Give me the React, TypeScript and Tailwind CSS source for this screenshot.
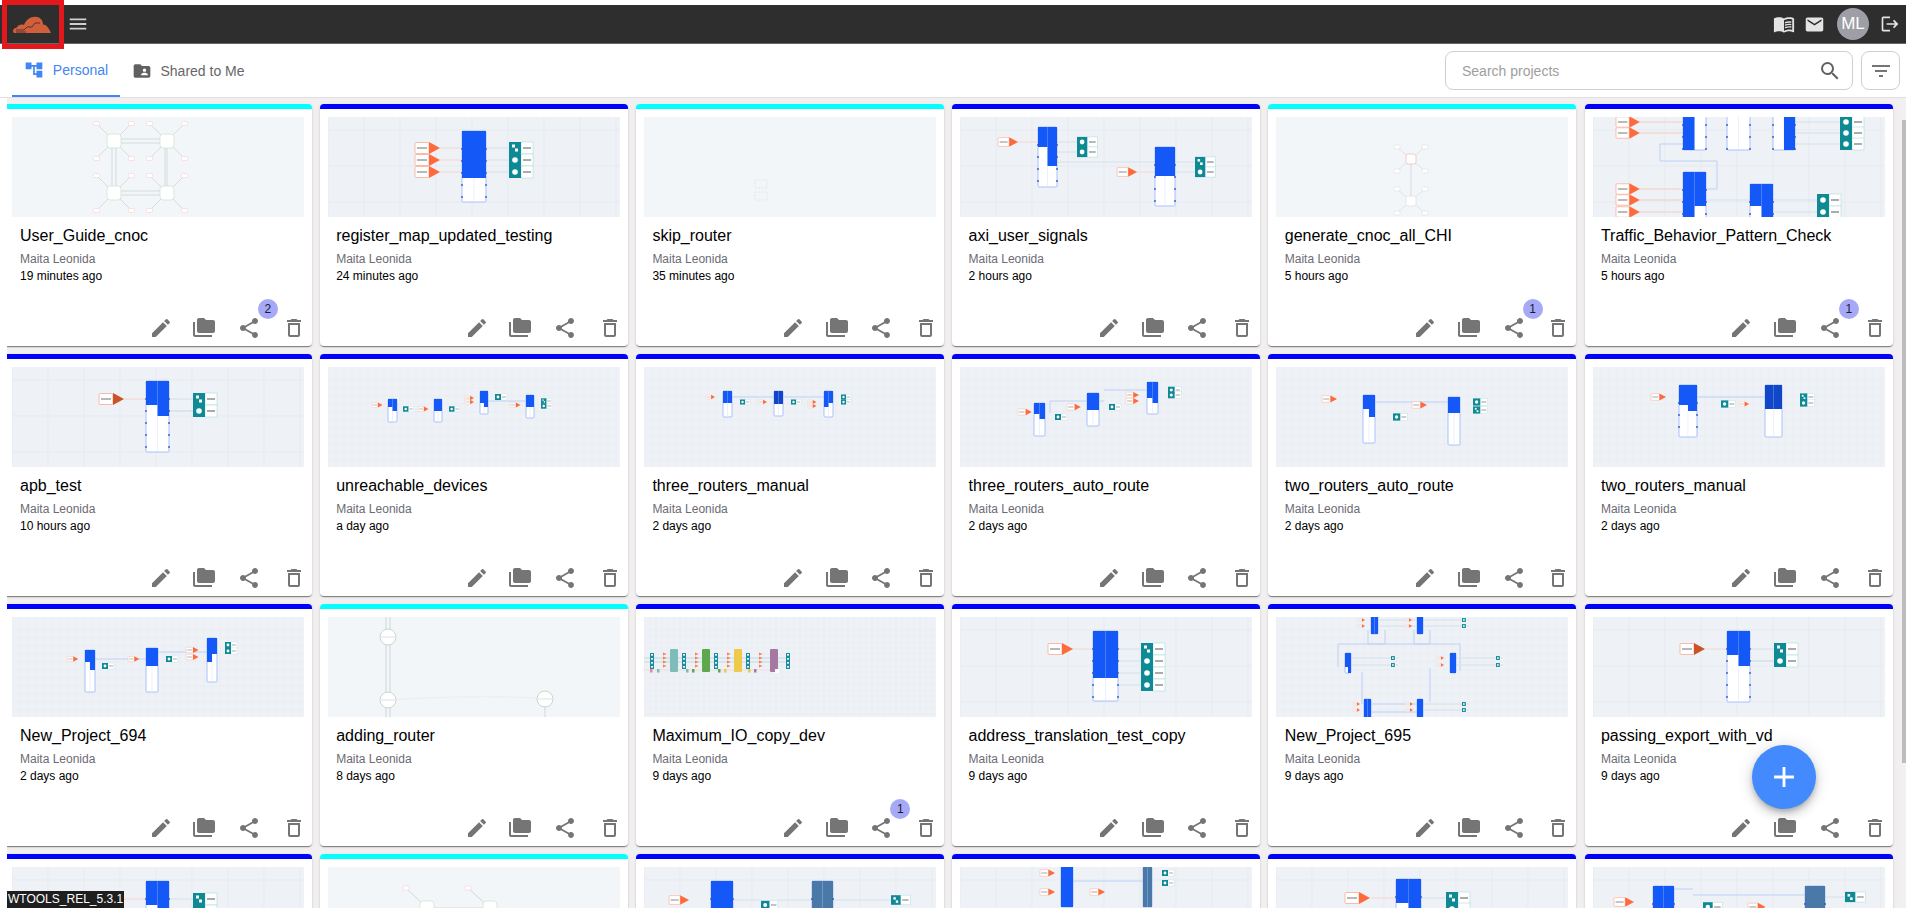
import type { ReactNode } from "react";
import {
  MdAccountTree,
  MdAdd,
  MdDeleteOutline,
  MdEdit,
  MdEmail,
  MdFilterList,
  MdFolderCopy,
  MdFolderShared,
  MdLogout,
  MdMenu,
  MdMenuBook,
  MdSearch,
  MdShare,
} from "react-icons/md";

const BLUE = "#1558f8";
const STEEL = "#4a78a8";

type InpProps = { x: number; y: number; s?: number; dark?: boolean };
type OutProps = { x: number; y: number; s?: number; alt?: boolean };

const Inp = ({ x, y, s = 1, dark }: InpProps) => (
  <g>
    <rect x={x} y={y - 5.5 * s} width={14 * s} height={11 * s} rx={s} fill="#fff" stroke="#f9bba8" strokeWidth={s} />
    <rect x={x + 2 * s} y={y - 0.7 * s} width={10 * s} height={1.4 * s} fill="#9a9a9a" />
    <polygon
      points={`${x + 14 * s},${y - 6 * s} ${x + 25 * s},${y} ${x + 14 * s},${y + 6 * s}`}
      fill={dark ? "#cc5228" : "#ff6a3d"}
    />
  </g>
);

const Out = ({ x, y, s = 1, alt }: OutProps) => (
  <g>
    <rect x={x + 12 * s} y={y - 6 * s} width={12 * s} height={12 * s} fill="#fff" stroke="#b4dfe0" strokeWidth={0.7 * s} />
    <rect x={x + 14 * s} y={y - 0.7 * s} width={8 * s} height={1.4 * s} fill="#888" />
    <rect x={x} y={y - 6 * s} width={12 * s} height={12 * s} fill="#0e8a94" />
    {alt ? (
      <g fill="#fff">
        <rect x={x + 3 * s} y={y - 3.5 * s} width={3 * s} height={3 * s} />
        <rect x={x + 6 * s} y={y + 0.5 * s} width={3 * s} height={3 * s} />
      </g>
    ) : (
      <circle cx={x + 6 * s} cy={y} r={2.8 * s} fill="#fff" />
    )}
  </g>
);

type RouterProps = { x: number; y: number; w: number; h: number; l: number; r: number; c?: string };

const Router = ({ x, y, w, h, l, r, c = BLUE }: RouterProps) => {
  // port dots only read at the larger zoom levels
  const ports = w >= 18 ? Array.from({ length: Math.floor((h - 18) / 12) + 1 }, (_, i) => y + 18 + i * 12) : [];
  return (
    <g>
      <rect x={x} y={y} width={w} height={h} rx={1} fill="#fff" stroke="#a9c1fb" strokeWidth={1} />
      <line x1={x + w / 2} y1={y} x2={x + w / 2} y2={y + h} stroke="#dbe5fd" strokeWidth={0.6} />
      <rect x={x} y={y} width={w / 2} height={l} fill={c} />
      <rect x={x + w / 2} y={y} width={w / 2} height={r} fill={c} />
      {ports.map((py) => (
        <g key={py} fill="#2f55b8">
          <circle cx={x} cy={py} r={0.9} />
          <circle cx={x + w} cy={py} r={0.9} />
        </g>
      ))}
    </g>
  );
};

const Wire = ({ d, c = "#d3e2ea", w = 1 }: { d: string; c?: string; w?: number }) => (
  <path d={d} fill="none" stroke={c} strokeWidth={w} />
);

const Pink = ({ d, w = 1 }: { d: string; w?: number }) => <Wire d={d} c="#f7d6cb" w={w} />;

const Frame = ({ d }: { d: string }) => <Wire d={d} c="#bfd1f8" w={1} />;

const Lines = ({ step }: { step: number }) => {
  const xs = Array.from({ length: Math.ceil(292 / step) }, (_, i) => i * step);
  const ys = Array.from({ length: Math.ceil(100 / step) + 1 }, (_, i) => 13 + i * step);
  const color = step > 20 ? "#e2e5ea" : "#e8ebf0";
  return (
    <g stroke={color} strokeWidth={0.6}>
      {xs.map((x) => (
        <line key={x} x1={x} y1={0} x2={x} y2={100} />
      ))}
      {ys.map((y) => (
        <line key={y} x1={0} y1={y} x2={292} y2={y} />
      ))}
    </g>
  );
};

const Node = ({ x, y, r = 7, c = "#cfe6cf" }: { x: number; y: number; r?: number; c?: string }) => (
  <rect x={x - r} y={y - r} width={r * 2} height={r * 2} rx={r * 0.45} fill="#fff" stroke={c} strokeWidth={0.8} />
);

const Leaf = ({ x, y, c = "#f6d5d5" }: { x: number; y: number; c?: string }) => (
  <rect x={x - 3} y={y - 2} width={6} height={4} rx={1} fill="#fff" stroke={c} strokeWidth={0.7} />
);

const Mesh = ({ x, y }: { x: number; y: number }) => (
  <g>
    {[
      [-17.5, -17.5],
      [17.5, -17.5],
      [-17.5, 17.5],
      [17.5, 17.5],
    ].map(([dx, dy]) => (
      <g key={`${dx}${dy}`}>
        <line x1={x} y1={y} x2={x + dx} y2={y + dy} stroke="#bcc2c2" strokeWidth={0.5} />
        <Leaf x={x + dx} y={y + dy} />
      </g>
    ))}
    <Node x={x} y={y} />
  </g>
);

const singleRouter = (dark: boolean, cut: boolean) => (
  <>
    <Lines step={36} />
    <Pink d="M112 32H134" />
    <Wire d="M157 32H181" />
    <Wire d="M157 44H181" w={1.6} />
    <Router x={134} y={14} w={23} h={71} l={cut ? 24 : 47} r={35} />
    <Inp x={87} y={32} dark={dark} />
    <Out x={181} y={32} alt />
    <Out x={181} y={44} />
  </>
);

const previews: Record<string, ReactNode> = {
  User_Guide_cnoc: (
    <>
      <Wire d="M102 22H155M102 26H155M100 24V76M104 24V76M155 24V76M153 24V76M102 74H155M102 78H155" c="#cdd4d5" w={0.8} />
      <Mesh x={102} y={24} />
      <Mesh x={155} y={24} />
      <Mesh x={102} y={76} />
      <Mesh x={155} y={76} />
    </>
  ),
  register_map_updated_testing: (
    <>
      <Lines step={36} />
      <Pink d="M112 31H134M112 43H134M112 55H134" />
      <Wire d="M158 31H181M158 43H181M158 55H181" />
      <Router x={134} y={14} w={24} h={71} l={47} r={47} />
      {[31, 43, 55].map((y) => (
        <Inp key={y} x={87} y={y} />
      ))}
      <Out x={181} y={31} alt />
      <Out x={181} y={43} />
      <Out x={181} y={55} />
    </>
  ),
  skip_router: (
    <g fill="none" stroke="#d6dcdc" strokeWidth={0.7} strokeDasharray="1.5 1.5">
      <rect x={111} y={63} width={12} height={8} />
      <rect x={111} y={75} width={12} height={8} />
    </g>
  ),
  axi_user_signals: (
    <>
      <Lines step={36} />
      <Pink d="M58 25H78M168 55H195" />
      <Wire d="M97 25H117M97 35H117M97 45H195M215 45H235M215 55H235" />
      <Router x={78} y={10} w={19} h={60} l={20} r={39} />
      <Router x={195} y={30} w={20} h={59} l={29} r={29} />
      <Inp x={38} y={25} s={0.8} />
      <Inp x={157} y={55} s={0.8} />
      <Out x={117} y={25} s={0.85} />
      <Out x={117} y={35} s={0.85} />
      <Out x={235} y={45} s={0.85} alt />
      <Out x={235} y={55} s={0.85} />
    </>
  ),
  generate_cnoc_all_CHI: (
    <>
      <Wire d="M135 42V84" c="#d4dada" />
      <Wire d="M135 42L121 30M135 42L149 30M135 42L121 54M135 42L149 54M135 84L121 72M135 84L149 72M135 84L121 96M135 84L149 96" c="#d0d6d6" w={0.6} />
      {[
        [121, 30],
        [149, 30],
        [121, 54],
        [149, 54],
        [121, 72],
        [149, 72],
        [121, 96],
        [149, 96],
      ].map(([x, y]) => (
        <Leaf key={`${x}${y}`} x={x} y={y} c="#dfe3e3" />
      ))}
      <Node x={135} y={42} r={5} c="#f1bcbc" />
      <Node x={135} y={84} r={5} c="#dfe3e3" />
    </>
  ),
  Traffic_Behavior_Pattern_Check: (
    <>
      <Lines step={36} />
      <Wire d="M46 5H90M46 16H90M46 72H90M46 83H90M46 95H90" c="#f7cdbf" />
      <Wire d="M202 5H247M202 16H247M202 27H247M113 83H157M180 83H224M180 95H224" />
      <Frame d="M90 27H67V44H124V72H113" />
      <Router x={90} y={-10} w={23} h={43} l={43} r={0} />
      <Router x={134} y={-10} w={23} h={43} l={0} r={0} />
      <Router x={180} y={-10} w={22} h={43} l={0} r={43} />
      <Router x={90} y={55} w={23} h={60} l={60} r={34} />
      <Router x={157} y={67} w={23} h={50} l={22} r={50} />
      {[5, 16, 72, 83, 95].map((y) => (
        <Inp key={y} x={23} y={y} s={0.95} />
      ))}
      {[5, 16, 27].map((y) => (
        <Out key={y} x={247} y={y} />
      ))}
      <Out x={224} y={83} />
      <Out x={224} y={95} />
    </>
  ),
  apb_test: singleRouter(true, true),
  unreachable_devices: (
    <>
      <Lines step={8} />
      <Frame d="M160 34H198" />
      <Inp x={44} y={38} s={0.42} />
      <Router x={60} y={32} w={9} h={23} l={8} r={12} />
      <Out x={75} y={42} s={0.45} />
      <Inp x={90} y={42} s={0.42} />
      <Router x={106} y={32} w={8} h={23} l={12} r={12} />
      <Out x={121} y={42} s={0.45} />
      <Inp x={137} y={31} s={0.36} />
      <Inp x={137} y={35} s={0.36} />
      <Router x={152} y={24} w={8} h={23} l={12} r={16} />
      <Out x={167} y={30} s={0.5} />
      <Inp x={182} y={38} s={0.42} />
      <Router x={198} y={28} w={8} h={23} l={12} r={12} />
      <Out x={213} y={34} s={0.45} alt />
      <Out x={213} y={39} s={0.45} />
    </>
  ),
  three_routers_manual: (
    <>
      <Lines step={8} />
      <Frame d="M88 30H180" />
      <Inp x={62} y={30} s={0.36} />
      <Router x={79} y={24} w={9} h={26} l={12} r={12} />
      <Out x={96} y={35} s={0.42} />
      <Inp x={114} y={35} s={0.36} />
      <Router x={130} y={24} w={9} h={25} l={13} r={13} c="#1046c8" />
      <Out x={147} y={35} s={0.42} />
      <Inp x={164} y={35} s={0.34} />
      <Inp x={164} y={39} s={0.34} />
      <Router x={180} y={24} w={9} h={26} l={16} r={12} />
      <Out x={197} y={30} s={0.42} />
      <Out x={197} y={35} s={0.42} />
    </>
  ),
  three_routers_auto_route: (
    <>
      <Lines step={8} />
      <Frame d="M90 46V34H144M144 23H187" />
      <Inp x={58} y={45} s={0.55} />
      <Router x={74} y={36} w={11} h={33} l={11} r={16} />
      <Out x={95} y={50} s={0.5} />
      <Inp x={107} y={40} s={0.55} />
      <Router x={127} y={26} w={12} h={33} l={17} r={17} />
      <Out x={149} y={40} s={0.5} />
      <Inp x={166} y={28} s={0.52} />
      <Inp x={166} y={34} s={0.52} />
      <Router x={187} y={15} w={11} h={32} l={16} r={21} />
      <Out x={208} y={23} s={0.55} />
      <Out x={208} y={28} s={0.55} />
    </>
  ),
  two_routers_auto_route: (
    <>
      <Lines step={8} />
      <Frame d="M99 35H172" />
      <Inp x={46} y={32} s={0.6} />
      <Router x={87} y={28} w={12} h={48} l={14} r={22} />
      <Out x={117} y={50} s={0.6} />
      <Inp x={136} y={38} s={0.6} />
      <Router x={172} y={30} w={12} h={48} l={16} r={16} />
      <Out x={197} y={35} s={0.6} />
      <Out x={197} y={43} s={0.6} alt />
    </>
  ),
  two_routers_manual: (
    <>
      <Lines step={8} />
      <Frame d="M104 30H172" />
      <Inp x={58} y={30} s={0.6} />
      <Router x={86} y={18} w={18} h={52} l={20} r={26} />
      <Out x={128} y={37} s={0.6} />
      <Inp x={146} y={37} s={0.4} />
      <Router x={172} y={18} w={17} h={52} l={24} r={24} c="#1046c8" />
      <Out x={207} y={30} s={0.6} alt />
      <Out x={207} y={36} s={0.6} />
    </>
  ),
  New_Project_694: (
    <>
      <Lines step={8} />
      <Frame d="M83 42H134M146 35H195" />
      <Inp x={55} y={42} s={0.45} />
      <Router x={73} y={33} w={10} h={42} l={12} r={20} />
      <Out x={90} y={49} s={0.5} />
      <Inp x={116} y={42} s={0.45} />
      <Router x={134} y={31} w={12} h={44} l={18} r={18} />
      <Out x={154} y={42} s={0.5} />
      <Inp x={174} y={33} s={0.5} />
      <Inp x={174} y={40} s={0.5} />
      <Router x={195} y={21} w={10} h={44} l={24} r={16} />
      <Out x={213} y={28} s={0.5} />
      <Out x={213} y={34} s={0.5} />
    </>
  ),
  adding_router: (
    <>
      <Wire d="M58 0V100M62 0V100M217 82V100" c="#cfd6d8" />
      <Wire d="M60 83C100 80 180 78 217 82" c="#e3e8ea" w={0.6} />
      <circle cx={60} cy={20} r={8} fill="#fff" stroke="#c5d6ca" />
      <circle cx={60} cy={83} r={8} fill="#fff" stroke="#c5d6ca" />
      <circle cx={217} cy={82} r={8} fill="#fff" stroke="#c5d6ca" />
      <line x1={53} y1={20} x2={67} y2={20} stroke="#c6ced0" strokeWidth={0.6} />
      <line x1={53} y1={83} x2={67} y2={83} stroke="#c6ced0" strokeWidth={0.6} />
      <line x1={210} y1={82} x2={224} y2={82} stroke="#c6ced0" strokeWidth={0.6} />
    </>
  ),
  Maximum_IO_copy_dev: (
    <>
      <Lines step={6} />
      <Wire d="M0 41H142M0 45H142" c="#b9dde2" />
      <Wire d="M0 53H130" c="#f3d9dc" />
      {[
        [26, "#7dbcb8"],
        [58, "#5da84e"],
        [90, "#eec94a"],
        [126, "#a878a4"],
      ].map(([x, c]) => (
        <rect key={x} x={x as number} y={32} width={8} height={23} rx={1} fill={c as string} />
      ))}
      <rect x={131} y={52} width={4} height={4} fill="#fff" />
      {[6, 38, 70, 102, 142].map((x) => (
        <g key={x}>
          <rect x={x} y={36} width={4} height={16} fill="#1a8ea0" />
          {[38, 42, 46, 50].map((y) => (
            <rect key={y} x={x + 1} y={y - 1} width={2} height={1.6} fill="#fff" />
          ))}
        </g>
      ))}
      {[19, 51, 83, 115].flatMap((x) =>
        [37, 41, 45, 49].map((y) => (
          <polygon key={`${x}${y}`} points={`${x},${y - 1.5} ${x + 3.5},${y} ${x},${y + 1.5}`} fill="#ff7a50" />
        ))
      )}
      {[
        [6, "#e08a9a"],
        [13, "#7dbcb8"],
        [42, "#7dbcb8"],
        [48, "#5da84e"],
        [74, "#5da84e"],
        [80, "#eec94a"],
        [104, "#eec94a"],
        [110, "#a878a4"],
      ].map(([x, c]) => (
        <rect key={`${x}`} x={x as number} y={52} width={2.5} height={3.5} fill={c as string} />
      ))}
    </>
  ),
  address_translation_test_copy: (
    <>
      <Lines step={36} />
      <Pink d="M111 32H133" />
      <Wire d="M158 32H181M158 44H181M158 56H181M158 68H181" />
      <Router x={133} y={14} w={25} h={70} l={47} r={47} />
      <Inp x={88} y={32} />
      <Out x={181} y={32} alt />
      <Out x={181} y={44} />
      <Out x={181} y={56} />
      <Out x={181} y={68} />
    </>
  ),
  New_Project_695: (
    <>
      <Lines step={8} />
      <Frame d="M92 13V27H109V13M138 13V27H154V13M62 50V27H184V54M86 55V87M154 51V85" />
      <Frame d="M95 87H141M95 95H141" />
      <Wire d="M102 3H186M102 9H186M75 41H115M75 48H115M180 41H220M180 48H220M147 87H186M147 93H186" />
      <Router x={95} y={-4} w={7} h={21} l={21} r={21} />
      <Router x={141} y={-4} w={6} h={21} l={21} r={21} />
      <Router x={69} y={36} w={6} h={20} l={14} r={20} />
      <Router x={174} y={36} w={6} h={20} l={20} r={20} />
      <Router x={88} y={82} w={7} h={24} l={24} r={24} />
      <Router x={141} y={82} w={6} h={24} l={24} r={24} />
      {[
        [82, 3],
        [82, 9],
        [129, 3],
        [129, 9],
        [161, 41],
        [161, 48],
        [77, 87],
        [77, 93],
        [130, 87],
        [130, 93],
      ].map(([x, y]) => (
        <Inp key={`${x}${y}`} x={x} y={y} s={0.28} />
      ))}
      {[
        [186, 3],
        [186, 9],
        [115, 41],
        [115, 48],
        [220, 41],
        [220, 48],
        [186, 87],
        [186, 93],
      ].map(([x, y]) => (
        <Out key={`${x}${y}`} x={x} y={y} s={0.32} />
      ))}
    </>
  ),
  passing_export_with_vd: singleRouter(true, true),
  row4_a: singleRouter(false, true),
  row4_b: (
    <>
      <Wire d="M78 21L99 41M140 21L162 41M99 41H162" c="#c3cbcd" w={0.7} />
      <Leaf x={78} y={21} />
      <Leaf x={140} y={21} />
      <Node x={99} y={41} />
      <Node x={162} y={41} />
    </>
  ),
  row4_c: (
    <>
      <Lines step={36} />
      <Wire d="M89 33H117M134 33H168M189 33H247" />
      <Router x={67} y={14} w={22} h={60} l={50} r={50} />
      <Router x={168} y={14} w={21} h={60} l={50} r={50} c={STEEL} />
      <Inp x={25} y={33} s={0.8} />
      <Out x={117} y={38} s={0.7} />
      <Out x={247} y={33} s={0.8} alt />
    </>
  ),
  row4_d: (
    <>
      <Lines step={36} />
      <Frame d="M113 14H183" />
      <Router x={101} y={0} w={12} h={40} l={40} r={40} />
      <Router x={183} y={0} w={9} h={40} l={40} r={40} c={STEEL} />
      <Inp x={80} y={6} s={0.6} />
      <Inp x={80} y={25} s={0.6} />
      <Inp x={130} y={25} s={0.6} />
      <Out x={202} y={6} s={0.5} />
      <Out x={202} y={16} s={0.5} />
    </>
  ),
  row4_e: (
    <>
      <Lines step={36} />
      <Pink d="M95 31H120" />
      <Wire d="M145 31H170" />
      <Router x={120} y={12} w={25} h={60} l={24} r={50} />
      <Inp x={69} y={31} />
      <Out x={170} y={31} alt />
      <Out x={170} y={42} />
    </>
  ),
  row4_f: (
    <>
      <Lines step={36} />
      <Frame d="M81 22H100M100 28H212" />
      <Wire d="M232 30H252" />
      <Router x={60} y={19} w={21} h={40} l={40} r={40} />
      <Router x={212} y={19} w={20} h={40} l={40} r={40} c={STEEL} />
      <Inp x={21} y={35} s={0.8} />
      <Inp x={21} y={46} s={0.8} />
      <Inp x={155} y={40} s={0.7} />
      <Out x={110} y={40} s={0.8} />
      <Out x={252} y={30} s={0.85} alt />
    </>
  ),
};

type Project = { id: string; name: string; time: string; cyan?: boolean; badge?: number };

const projects: Project[] = [
  { id: "User_Guide_cnoc", name: "User_Guide_cnoc", time: "19 minutes ago", cyan: true, badge: 2 },
  { id: "register_map_updated_testing", name: "register_map_updated_testing", time: "24 minutes ago" },
  { id: "skip_router", name: "skip_router", time: "35 minutes ago", cyan: true },
  { id: "axi_user_signals", name: "axi_user_signals", time: "2 hours ago" },
  { id: "generate_cnoc_all_CHI", name: "generate_cnoc_all_CHI", time: "5 hours ago", cyan: true, badge: 1 },
  { id: "Traffic_Behavior_Pattern_Check", name: "Traffic_Behavior_Pattern_Check", time: "5 hours ago", badge: 1 },
  { id: "apb_test", name: "apb_test", time: "10 hours ago" },
  { id: "unreachable_devices", name: "unreachable_devices", time: "a day ago" },
  { id: "three_routers_manual", name: "three_routers_manual", time: "2 days ago" },
  { id: "three_routers_auto_route", name: "three_routers_auto_route", time: "2 days ago" },
  { id: "two_routers_auto_route", name: "two_routers_auto_route", time: "2 days ago" },
  { id: "two_routers_manual", name: "two_routers_manual", time: "2 days ago" },
  { id: "New_Project_694", name: "New_Project_694", time: "2 days ago" },
  { id: "adding_router", name: "adding_router", time: "8 days ago", cyan: true },
  { id: "Maximum_IO_copy_dev", name: "Maximum_IO_copy_dev", time: "9 days ago", badge: 1 },
  { id: "address_translation_test_copy", name: "address_translation_test_copy", time: "9 days ago" },
  { id: "New_Project_695", name: "New_Project_695", time: "9 days ago" },
  { id: "passing_export_with_vd", name: "passing_export_with_vd", time: "9 days ago" },
  { id: "row4_a", name: "", time: "" },
  { id: "row4_b", name: "", time: "", cyan: true },
  { id: "row4_c", name: "", time: "" },
  { id: "row4_d", name: "", time: "" },
  { id: "row4_e", name: "", time: "" },
  { id: "row4_f", name: "", time: "" },
];

const ProjectCard = ({ project }: { project: Project }) => (
  <div className="flex h-[242px] flex-col overflow-hidden rounded bg-white shadow-[0_2px_1px_-1px_rgba(0,0,0,0.3),0_1px_1px_0_rgba(0,0,0,0.2),0_1px_3px_0_rgba(0,0,0,0.12)]">
    <div className={project.cyan ? "h-[5px] shrink-0 bg-[#00ffff]" : "h-[5px] shrink-0 bg-[#0000ff]"} />
    <div className={project.cyan ? "mx-2 mt-2 h-[100px] shrink-0 bg-[#f2f6f9]" : "mx-2 mt-2 h-[100px] shrink-0 bg-[#eef1f5]"}>
      <svg viewBox="0 0 292 100" className="block h-[100px] w-[292px] blur-[0.35px]">
        {previews[project.id]}
      </svg>
    </div>
    <div className="mt-[7px] h-6 px-[16.4px] text-base leading-6 text-black">{project.name}</div>
    <div className="mt-[3px] h-[17px] px-[16.4px] text-xs leading-[17px] text-[#6b6b73]">
      {project.name ? "Maita Leonida" : ""}
    </div>
    <div className="h-[17px] px-[16.4px] text-xs leading-[17px] text-black">{project.time}</div>
    <div className="mt-auto flex items-center justify-end gap-[20.7px] pr-[6px] pb-[6px] text-[#757575]">
      <MdEdit size={24} className="mr-[-1px]" />
      <MdFolderCopy size={24} />
      <div className="relative h-6 w-6">
        <MdShare size={24} />
        {project.badge && (
          <span className="absolute top-[-17px] left-[21px] flex h-5 w-5 items-center justify-center rounded-full bg-[#a5a9f7] text-xs text-[#1a1a2e]">
            {project.badge}
          </span>
        )}
      </div>
      <MdDeleteOutline size={24} />
    </div>
  </div>
);

const Logo = () => (
  <svg viewBox="0 0 38 17" className="h-[17px] w-[38px]">
    <path
      d="M1 17C-1 15 0 12 4 11.5C5 8.5 9 8 11 9C13 3 20 -1 26 1.5C29 3 30 6 30 8.5C33 8 36 12 38 17Z"
      fill="#d0603c"
    />
    <path d="M3 14H11L14 11H19L22 7H27M3 16H13" fill="none" stroke="#3a2a24" strokeWidth={0.8} />
  </svg>
);

const App = () => {
  return (
    <div className="relative flex h-[908px] w-[1906px] flex-col overflow-hidden bg-white font-['Liberation_Sans',Arial,sans-serif]">
      <div className="h-[5px] shrink-0 bg-white" />

      <header className="flex h-[39px] shrink-0 items-center border-b border-[#666] bg-[#2e2e2e] pr-[6px] text-[#e4e4e4]">
        <div className="ml-[13px]">
          <Logo />
        </div>
        <div className="ml-[16px]">
          <MdMenu size={22} className="text-[#cfcfcf]" />
        </div>
        <div className="ml-auto flex items-center">
          <MdMenuBook size={22} />
          <MdEmail size={21} className="ml-[9px]" />
          <div className="ml-[12px] flex h-8 w-8 items-center justify-center rounded-full bg-[#9e9ea6] text-[17px] text-white">
            ML
          </div>
          <MdLogout size={20} className="ml-[11px]" />
        </div>
      </header>

      <nav className="flex h-[54px] shrink-0 items-center justify-between border-b border-[#e0e0e0] pr-[6px] pl-3">
        <div className="flex h-full">
          <div className="flex h-full w-[108px] items-center justify-center gap-[9px] border-b-2 border-[#4285f4] text-sm text-[#4285f4]">
            <MdAccountTree size={20} />
            Personal
          </div>
          <div className="flex h-full w-[137px] items-center justify-center gap-[8px] text-sm text-[#666]">
            <MdFolderShared size={20} className="text-[#616161]" />
            Shared to Me
          </div>
        </div>
        <div className="flex items-center gap-2">
          <div className="flex h-[39px] w-[408px] items-center rounded-lg border border-[#cfcfcf] pr-[10px] pl-4">
            <input
              placeholder="Search projects"
              className="min-w-0 flex-1 bg-transparent text-sm outline-none placeholder:text-[#9e9e9e]"
            />
            <MdSearch size={24} className="text-[#616161]" />
          </div>
          <div className="flex h-[39px] w-[39px] items-center justify-center rounded-lg border border-[#cfcfcf] text-[#757575]">
            <MdFilterList size={24} />
          </div>
        </div>
      </nav>

      <main className="flex min-h-0 flex-1 pl-[7px]">
        <div className="min-w-0 flex-1 overflow-hidden bg-[#f1eff0]">
          <div className="ml-[-3.4px] grid grid-cols-[repeat(6,308px)] gap-x-[8.2px] gap-y-2 pt-[6px]">
            {projects.map((project) => (
              <ProjectCard key={project.id} project={project} />
            ))}
          </div>
        </div>
        <div className="w-1 shrink-0 bg-[#f1f1f1]">
          <div className="mt-[22px] h-[643px] bg-[#bdbdbd]" />
        </div>
      </main>

      {/* annotation around the logo */}
      <div className="pointer-events-none absolute top-0 left-[2px] h-[49px] w-[62px] border-[5px] border-[#e3181c]" />

      <div className="absolute bottom-0 left-[7px] bg-[#1e1e1e] px-px text-xs leading-[17px] text-white">
        WTOOLS_REL_5.3.1
      </div>

      <button className="absolute top-[745px] left-[1752px] flex h-16 w-16 items-center justify-center rounded-full bg-[#448aff] text-white shadow-[0_3px_5px_-1px_rgba(0,0,0,0.2),0_6px_10px_0_rgba(0,0,0,0.14),0_1px_18px_0_rgba(0,0,0,0.12)]">
        <MdAdd size={34} />
      </button>
    </div>
  );
};

export default App;
